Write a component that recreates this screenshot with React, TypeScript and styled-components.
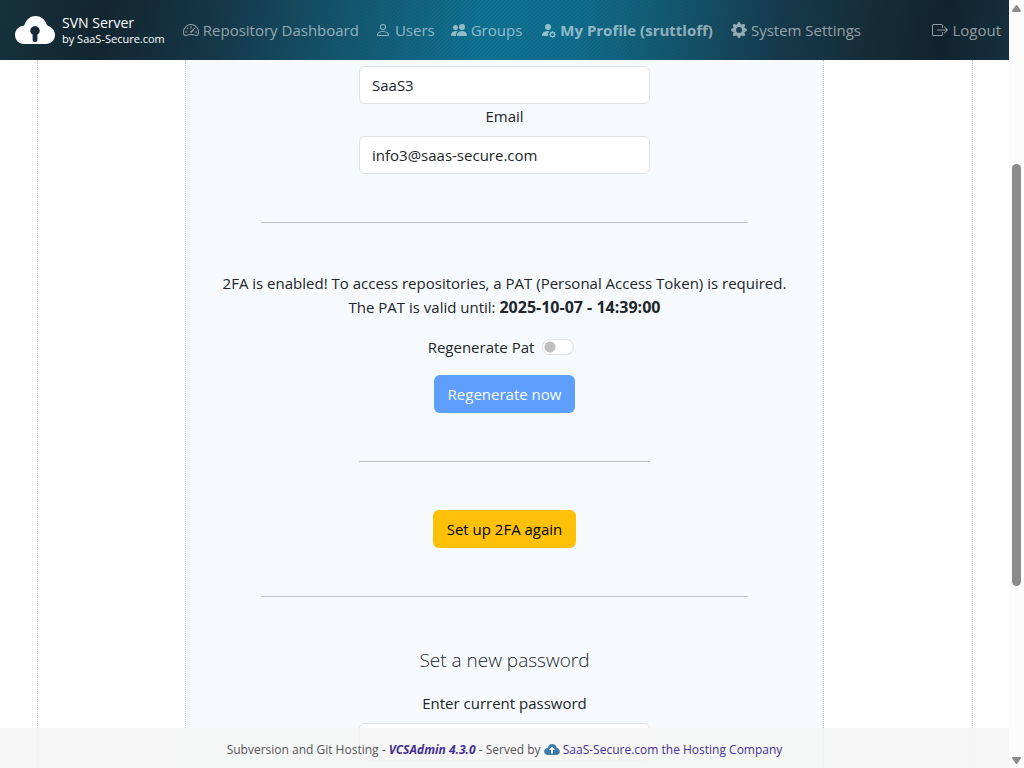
import React from "react";
import styled, { createGlobalStyle, css } from "styled-components";
import {
  BsBoxArrowRight,
  BsGearFill,
  BsPeopleFill,
  BsPerson,
  BsPersonFillGear,
  BsSpeedometer2,
} from "react-icons/bs";

const GlobalStyle = createGlobalStyle`
  *, *::before, *::after { box-sizing: border-box; }
  body {
    margin: 0;
    background: #fff;
    color: #212529;
    font-family: "Open Sans", "Noto Sans", sans-serif;
    font-size: 15px;
    line-height: 24px;
  }
`;

const Shell = styled.div`
  display: grid;
  grid-template-columns: minmax(0, 1fr) 15px;
  height: 100vh;
  overflow: hidden;
`;

const Page = styled.div`
  display: grid;
  grid-template-rows: 60px minmax(0, 1fr);
  position: relative;
  min-height: 0;
`;

const Header = styled.header`
  display: flex;
  align-items: center;
  padding: 0 8px 0 15px;
  background:
    linear-gradient(
        135deg,
        rgba(0, 20, 40, 0.2) 12%,
        transparent 13% 50%,
        rgba(0, 20, 40, 0.2) 51% 62%,
        transparent 63%
      )
      0 0 / 4px 4px,
    linear-gradient(
      100deg,
      #15333d 0%,
      #132630 10%,
      #163646 21%,
      #14566e 34%,
      #107292 48%,
      #106d8c 57%,
      #14566e 67%,
      #163a4c 77%,
      #162f3a 85%,
      #11232e 93%,
      #163140 100%
    );
`;

const Brand = styled.a`
  display: flex;
  align-items: center;
  gap: 7px;
  margin-right: 10px;
  color: #fff;
  text-decoration: none;
`;

const BrandText = styled.span`
  display: flex;
  flex-direction: column;
  font-size: 14px;
  line-height: 17px;
  white-space: nowrap;
`;

const BrandSmall = styled.small`
  font-size: 11px;
  line-height: 15px;
`;

const Nav = styled.nav`
  display: flex;
  flex: 1;
`;

const NavLink = styled.a<{ $active?: boolean; $end?: boolean }>`
  display: flex;
  align-items: center;
  gap: 4px;
  padding: 8px ${(p) => (p.$active ? 10 : 8)}px;
  color: rgba(255, 255, 255, 0.55);
  font-weight: ${(p) => (p.$active ? 700 : 400)};
  text-decoration: none;
  white-space: nowrap;
  ${(p) =>
    p.$end &&
    css`
      margin-left: auto;
      padding-right: 0;
    `}

  svg {
    flex: none;
  }
`;

const Main = styled.main`
  display: grid;
  justify-items: center;
  min-height: 0;
  overflow: hidden;
`;

const Frame = styled.div`
  display: grid;
  justify-items: center;
  width: calc(100% - 73px);
  max-width: 936px;
  border: 1px dotted #ccc;
  border-width: 0 1px;
`;

const Panel = styled.div`
  display: flex;
  flex-direction: column;
  align-items: center;
  width: 100%;
  max-width: 639px;
  padding-top: 6px;
  background: #f6fafd;
  border: 1px dotted #ccc;
  border-width: 0 1px;
  text-align: center;
`;

const Label = styled.label`
  margin-bottom: 8px;
`;

const Field = styled.input`
  flex: none;
  width: 100%;
  max-width: 291px;
  height: 38px;
  padding: 6px 12px;
  border: 1px solid #dee2e6;
  border-radius: 6px;
  background: #fff;
  color: #212529;
  font: inherit;
`;

const Divider = styled.hr<{ $short?: boolean }>`
  width: 100%;
  max-width: ${(p) => (p.$short ? 291 : 487)}px;
  margin: 48px 0;
  border: 0;
  border-top: 1px solid #bfc3c6;
`;

const Notice = styled.p`
  margin: 0 0 16px;

  strong {
    font-size: 16px;
  }
`;

const SwitchRow = styled.div`
  display: flex;
  align-items: center;
  gap: 8px;
  margin-bottom: 16px;
  padding-right: 7px;
`;

const Switch = styled.input`
  width: 32px;
  height: 16px;
  margin: 0;
  appearance: none;
  border: 1px solid #dee2e6;
  border-radius: 8px;
  background: #fff radial-gradient(circle at 7px 7px, #bfbfbf 5px, transparent 6px) no-repeat;
`;

const Button = styled.button<{ $warning?: boolean }>`
  flex: none;
  height: 38px;
  padding: 6px 14px;
  border: 0;
  border-radius: 6px;
  background: ${(p) => (p.$warning ? "#ffc107" : "#0d6efd")};
  color: ${(p) => (p.$warning ? "#000" : "#fff")};
  font: inherit;

  &:disabled {
    opacity: 0.65;
  }
`;

const Heading = styled.h2`
  margin: 0 0 16px;
  font-size: 19px;
  font-weight: 300;
  line-height: 30px;
`;

const Footer = styled.footer`
  position: absolute;
  inset: auto 0 0;
  padding: 10px 0 6px;
  background: rgba(245, 245, 245, 0.9);
  color: #555;
  font-size: 12px;
  text-align: center;

  svg {
    vertical-align: -1px;
  }
`;

const FooterLink = styled.a<{ $product?: boolean }>`
  color: #432f93;
  text-decoration: none;
  ${(p) =>
    p.$product &&
    css`
      font-style: italic;
      font-weight: 700;
    `}
`;

const Scrollbar = styled.div`
  display: grid;
  grid-template-rows: 7px 152fr 422fr 171fr 7px;
  padding: 5px 3px 4px;
  background: #fcfcfc;
`;

const Thumb = styled.div`
  grid-row: 3;
  border-radius: 5px;
  background: #8b8b8b;
`;

const Arrow = styled.svg<{ $down?: boolean }>`
  grid-row: ${(p) => (p.$down ? 5 : 1)};
  width: 9px;
  height: 7px;
  fill: #8b8b8b;
`;

const cloudShape =
  "M9 28C4 28 0 24.1 0 19c0-4.500 3.200-8.300 7.500-8.900C8.500 9.900 9.300 9.300 9.700 8.200 11.500 3.200 15.600 0 20.500 0c5 0 9.300 3 11 8 .3.9.8 1.500 1.800 1.900C37.300 11.300 40 14.900 40 19c0 5-4 9-9 9z";

const CloudLogo = () => (
  <svg width="40" height="28" viewBox="0 0 40 28" aria-hidden="true">
    <path fill="#fff" d={cloudShape} />
    <path
      fill="#142a36"
      d="M20 10.200c-2.600 0-4.700 2-4.700 4.500 0 1.700.9 3.100 2.300 3.900v5.200c0 1.300 1 2.300 2.400 2.300s2.400-1 2.400-2.300v-5.200c1.400-.8 2.300-2.200 2.300-3.900 0-2.500-2.100-4.500-4.700-4.500z"
    />
  </svg>
);

const CloudUpload = () => (
  <svg width="16" height="11" viewBox="0 0 40 28" aria-hidden="true">
    <path fill="#3d7ca8" d={cloudShape} />
    <path fill="#fff" d="M20 7l8 8.500h-5.500V24h-5v-8.500H12z" />
  </svg>
);

const navItems = [
  { text: "Repository Dashboard", Icon: BsSpeedometer2 },
  { text: "Users", Icon: BsPerson },
  { text: "Groups", Icon: BsPeopleFill },
  { text: "My Profile (sruttloff)", Icon: BsPersonFillGear, active: true },
  { text: "System Settings", Icon: BsGearFill },
  { text: "Logout", Icon: BsBoxArrowRight, end: true },
];

export default function App() {
  return (
    <>
      <GlobalStyle />
      <Shell>
        <Page>
          <Header>
            <Brand href="#">
              <CloudLogo />
              <BrandText>
                SVN Server
                <BrandSmall>by SaaS-Secure.com</BrandSmall>
              </BrandText>
            </Brand>
            <Nav>
              {navItems.map(({ text, Icon, active, end }) => (
                <NavLink key={text} href="#" $active={active} $end={end}>
                  <Icon size={16} />
                  {text}
                </NavLink>
              ))}
            </Nav>
          </Header>

          <Main>
            <Frame>
              <Panel>
                <Field type="text" aria-label="Name" defaultValue="SaaS3" />
                <Label htmlFor="email">Email</Label>
                <Field id="email" type="email" defaultValue="info3@saas-secure.com" />
                <Divider />
                <Notice>
                  2FA is enabled! To access repositories, a PAT (Personal Access Token) is required.
                  <br />
                  The PAT is valid until: <strong>2025-10-07 - 14:39:00</strong>
                </Notice>
                <SwitchRow>
                  <label htmlFor="regenerate">Regenerate Pat</label>
                  <Switch id="regenerate" type="checkbox" role="switch" />
                </SwitchRow>
                <Button type="button" disabled>
                  Regenerate now
                </Button>
                <Divider $short />
                <Button type="button" $warning>
                  Set up 2FA again
                </Button>
                <Divider />
                <Heading>Set a new password</Heading>
                <Label htmlFor="current">Enter current password</Label>
                <Field id="current" type="password" />
              </Panel>
            </Frame>
          </Main>

          <Footer>
            Subversion and Git Hosting -{" "}
            <FooterLink href="#" $product>
              VCSAdmin 4.3.0
            </FooterLink>{" "}
            - Served by <CloudUpload />{" "}
            <FooterLink href="#">SaaS-Secure.com the Hosting Company</FooterLink>
          </Footer>
        </Page>

        <Scrollbar aria-hidden="true">
          <Arrow viewBox="0 0 9 7">
            <path d="M3.700.6Q4.500-.4 5.300.6L8.800 5.600Q9.300 7 8 7H1Q-.3 7 .2 5.600Z" />
          </Arrow>
          <Thumb />
          <Arrow $down viewBox="0 0 9 7">
            <path d="M3.700 6.400Q4.500 7.400 5.300 6.400L8.800 1.400Q9.300 0 8 0H1Q-.3 0 .2 1.400Z" />
          </Arrow>
        </Scrollbar>
      </Shell>
    </>
  );
}
